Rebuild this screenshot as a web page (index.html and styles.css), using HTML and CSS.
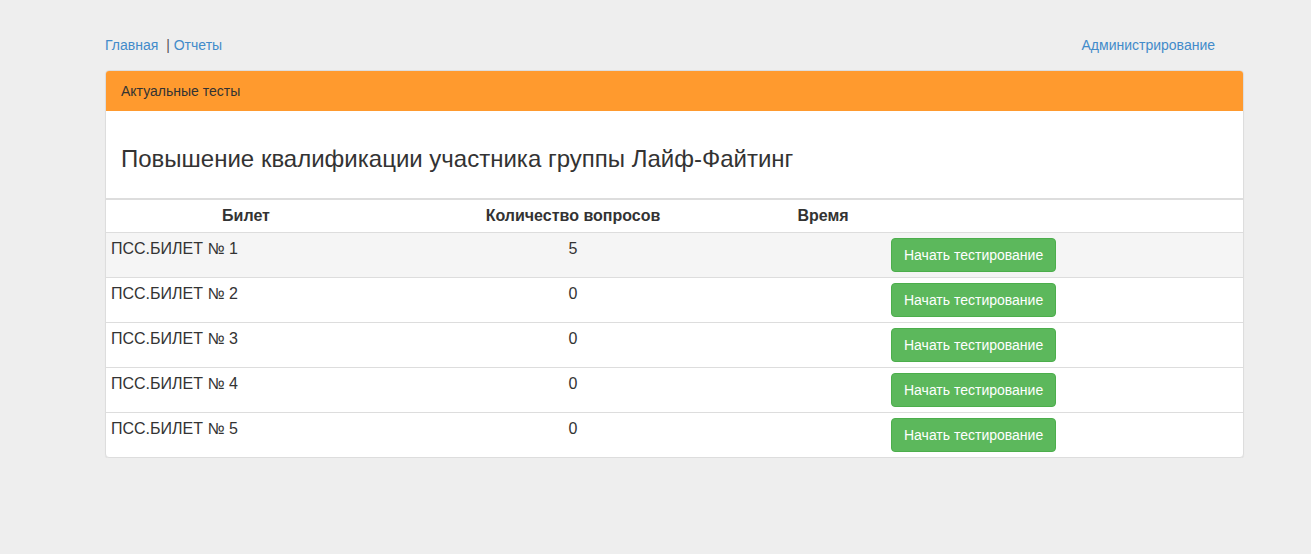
FILE: index.html
```html
<!DOCTYPE html>
<html lang="ru">
<head>
<meta charset="utf-8">
<title>Актуальные тесты</title>
<link rel="stylesheet" href="styles.css">
</head>
<body>
<div class="page">
  <nav class="topnav">
    <div class="nav-left">
      <a href="#" class="nav-link">Главная</a>
      <span class="sep">|</span>
      <a href="#" class="nav-link">Отчеты</a>
    </div>
    <a href="#" class="nav-link">Администрирование</a>
  </nav>
  <section class="panel">
    <div class="panel-heading">Актуальные тесты</div>
    <div class="panel-body">
      <h3 class="title">Повышение квалификации участника группы Лайф-Файтинг</h3>
    </div>
    <table class="tickets">
      <colgroup>
        <col class="c1"><col class="c2"><col class="c3"><col>
      </colgroup>
      <thead>
        <tr><th>Билет</th><th>Количество вопросов</th><th>Время</th><th></th></tr>
      </thead>
      <tbody>
        <tr class="hover"><td>ПСС.БИЛЕТ № 1</td><td class="num">5</td><td></td><td><a href="#" class="btn">Начать тестирование</a></td></tr>
        <tr><td>ПСС.БИЛЕТ № 2</td><td class="num">0</td><td></td><td><a href="#" class="btn">Начать тестирование</a></td></tr>
        <tr><td>ПСС.БИЛЕТ № 3</td><td class="num">0</td><td></td><td><a href="#" class="btn">Начать тестирование</a></td></tr>
        <tr><td>ПСС.БИЛЕТ № 4</td><td class="num">0</td><td></td><td><a href="#" class="btn">Начать тестирование</a></td></tr>
        <tr><td>ПСС.БИЛЕТ № 5</td><td class="num">0</td><td></td><td><a href="#" class="btn">Начать тестирование</a></td></tr>
      </tbody>
    </table>
  </section>
</div>
</body>
</html>
```
FILE: styles.css
```css
* { box-sizing: border-box; }
html, body { margin: 0; }
body {
  background: #eeeeee;
  font-family: "Liberation Sans", Arial, Helvetica, sans-serif;
  font-size: 14px;
  line-height: 20px;
  color: #333333;
}
.page {
  padding: 35px 67px 0 105px;
}
.topnav {
  display: flex;
  justify-content: space-between;
  align-items: center;
  padding-right: 29px;
  margin-bottom: 15px;
}
.nav-link {
  color: #428bca;
  text-decoration: none;
}
.sep {
  color: #555555;
  margin: 0 0 0 4px;
}
.panel {
  background: #ffffff;
  border: 1px solid #dddddd;
  border-radius: 4px;
  box-shadow: 0 1px 1px rgba(0, 0, 0, 0.05);
  overflow: hidden;
}
.panel-heading {
  background: #ff9a2e;
  padding: 10px 15px;
  color: #333333;
}
.panel-body {
  padding: 15px 15px 16px;
}
.title {
  margin: 20px 0 10px;
  font-size: 24px;
  font-weight: 500;
  line-height: 26px;
  color: #333333;
}
.tickets {
  width: 100%;
  border-collapse: collapse;
  border-top: 2px solid #dddddd;
  font-size: 16px;
  line-height: 22px;
}
.c1 { width: 280px; }
.c2 { width: 374px; }
.c3 { width: 126px; }
.tickets th {
  padding: 5px;
  text-align: center;
  font-weight: bold;
  border-bottom: 1px solid #dddddd;
}
.tickets td {
  padding: 5px;
  vertical-align: top;
  border-top: 1px solid #dddddd;
}
.tickets td.num { text-align: center; }
.tickets tr.hover td { background: #f5f5f5; }
.btn {
  display: inline-block;
  padding: 6px 12px;
  border: 1px solid #4cae4c;
  border-radius: 4px;
  background: #5cb85c;
  color: #ffffff;
  text-decoration: none;
  font-size: 14px;
  line-height: 20px;
  vertical-align: top;
}
```
